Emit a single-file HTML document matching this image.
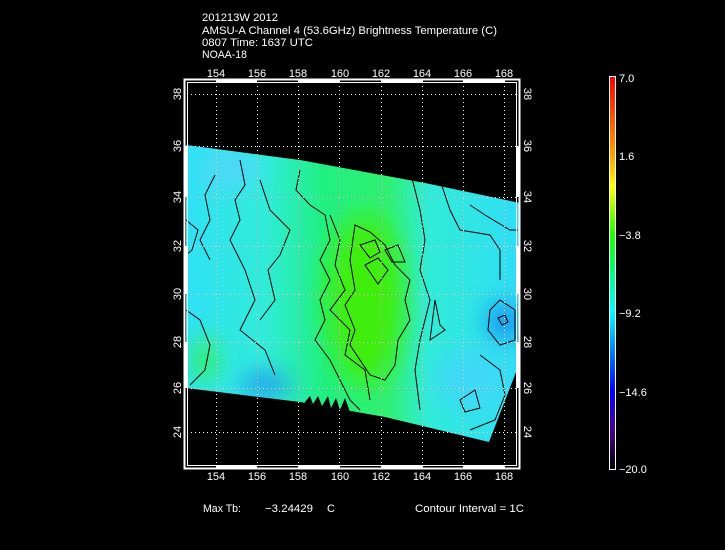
<!DOCTYPE html>
<html><head><meta charset="utf-8"><style>
html,body{margin:0;padding:0;background:#000;}
svg{display:block;}
text{font-family:"Liberation Sans",sans-serif;fill:#fff;font-size:11px;}
</style></head><body>
<svg width="725" height="550" viewBox="0 0 725 550" xmlns="http://www.w3.org/2000/svg">
<defs>
<linearGradient id="cb" x1="0" y1="0" x2="0" y2="1">
<stop offset="0" stop-color="#ff0000"/>
<stop offset="0.2" stop-color="#ffa000"/>
<stop offset="0.28" stop-color="#ffff00"/>
<stop offset="0.4" stop-color="#20ff00"/>
<stop offset="0.48" stop-color="#00ff60"/>
<stop offset="0.6" stop-color="#00ffff"/>
<stop offset="0.8" stop-color="#0000ff"/>
<stop offset="0.9" stop-color="#400090"/>
<stop offset="1" stop-color="#000000"/>
</linearGradient>
<linearGradient id="base" x1="0" y1="0" x2="1" y2="0">
<stop offset="0" stop-color="#30e0f8"/>
<stop offset="0.25" stop-color="#30ecd8"/>
<stop offset="0.42" stop-color="#20f080"/>
<stop offset="0.6" stop-color="#30f070"/>
<stop offset="0.72" stop-color="#30ecd8"/>
<stop offset="1" stop-color="#30dcf8"/>
</linearGradient>
<filter id="bl"><feGaussianBlur stdDeviation="12"/></filter>
<clipPath id="dc"><path d="M186,145 L300,160 L425,183 L520,203 L518,367 L489,442 L385,417 L300,402 L186,388 Z"/></clipPath>
</defs>
<g font-size="11">
<text x="202" y="21" textLength="76" lengthAdjust="spacingAndGlyphs">201213W 2012</text>
<text x="202" y="34" textLength="295" lengthAdjust="spacingAndGlyphs">AMSU-A Channel 4 (53.6GHz) Brightness Temperature (C)</text>
<text x="202" y="46" textLength="111" lengthAdjust="spacingAndGlyphs">0807 Time: 1637 UTC</text>
<text x="202" y="58" textLength="45" lengthAdjust="spacingAndGlyphs">NOAA-18</text>
</g>
<g clip-path="url(#dc)">
<rect x="180" y="140" width="345" height="310" fill="url(#base)"/>
<g filter="url(#bl)">
<ellipse cx="365" cy="300" rx="38" ry="85" fill="#40ee10"/>
<ellipse cx="505" cy="322" rx="18" ry="18" fill="#1890f0"/>
<ellipse cx="265" cy="385" rx="25" ry="12" fill="#2098f0"/>
<ellipse cx="205" cy="360" rx="15" ry="25" fill="#30f070"/>
<ellipse cx="230" cy="170" rx="30" ry="20" fill="#50d8f8"/>
<ellipse cx="470" cy="380" rx="35" ry="30" fill="#40d8f8"/>
</g>
<g fill="none" stroke="#000" stroke-width="1">
<path d="M300,170 L296,190 L310,205 L325,215 L330,240 L320,260 L330,280 L320,300 L325,320 L315,340 L330,360 L340,380 L350,400 L360,410"/>
<path d="M330,215 L340,240 L335,265 L345,290 L330,310 L350,330 L345,355 L365,370 L370,400"/>
<path d="M355,225 L370,232 L385,245 L395,265 L410,280 L405,300 L410,320 L398,340 L395,365 L385,380 L370,375 L360,360 L350,345 L355,330 L345,305 L355,290 L350,260 Z"/>
<path d="M360,245 L375,240 L380,252 L370,258 Z"/>
<path d="M365,265 L378,258 L388,270 L378,284 Z"/>
<path d="M385,250 L398,245 L405,262 L392,262 Z"/>
<path d="M410,170 L420,210 L425,240 L420,270 L430,300 L420,340 L415,370 L420,410"/>
<path d="M440,180 L450,210 L460,230 L490,235 L500,250 L500,280"/>
<path d="M470,205 L485,215 L510,230 L518,230"/>
<path d="M490,310 L500,300 L515,310 L515,340 L500,345 L488,330 Z"/>
<path d="M498,318 L505,315 L508,322 L502,325 Z"/>
<path d="M435,300 L440,325 L445,330 L430,340 Z"/>
<path d="M460,400 L475,390 L480,408 L465,412 Z"/>
<path d="M240,160 L245,185 L235,200 L240,220 L230,240 L245,270 L255,300 L240,330 L265,350 L275,375"/>
<path d="M215,175 L205,195 L210,220 L200,240 L210,260"/>
<path d="M186,220 L198,230 L192,250 L186,255"/>
<path d="M186,310 L200,320 L210,345 L205,370 L190,385"/>
<path d="M260,180 L270,210 L290,230 L280,255 L268,270 L275,300 L260,320"/>
<path d="M480,355 L500,370 L505,395 L495,420 L470,430"/>
</g>
<g fill="#000">
<path d="M305,402 L310,396 L313,404 L318,396 L322,406 L328,396 L331,408 L336,398 L340,410 L345,398 L350,412 L300,412 Z"/>
</g>
</g>
<g stroke="#fff" stroke-width="1" stroke-dasharray="1,3" fill="none">
<path d="M216.5,82V466M257.5,82V466M298.5,82V466M339.5,82V466M381.5,82V466M422.5,82V466M463.5,82V466M504.5,82V466"/>
<path d="M187,94.5H517M187,146.5H517M187,197.5H517M187,246.5H517M187,294.5H517M187,342.5H517M187,388.5H517M187,432.5H517"/>
</g>
<rect x="184.5" y="79.5" width="335" height="389" fill="none" stroke="#fff" stroke-width="2"/>
<rect x="187.5" y="82.5" width="329" height="383" fill="none" stroke="#fff" stroke-width="1"/>
<g stroke="#fff" stroke-width="3">
<path d="M216,81H257M298,81H340M381,81H423M463,81H505"/>
<path d="M216,467H257M298,467H340M381,467H423M463,467H505"/>
<path d="M186,146V197M186,246V294M186,342V388"/>
<path d="M518,146V197M518,246V294M518,342V388"/>
</g>
<g text-anchor="middle" font-size="11">
<text x="216" y="77">154</text><text x="257" y="77">156</text><text x="298" y="77">158</text><text x="340" y="77">160</text>
<text x="381" y="77">162</text><text x="422" y="77">164</text><text x="463" y="77">166</text><text x="504" y="77">168</text>
<text x="216" y="480">154</text><text x="257" y="480">156</text><text x="298" y="480">158</text><text x="340" y="480">160</text>
<text x="381" y="480">162</text><text x="422" y="480">164</text><text x="463" y="480">166</text><text x="504" y="480">168</text>
<text transform="translate(181,94) rotate(-90)">38</text>
<text transform="translate(181,146) rotate(-90)">36</text>
<text transform="translate(181,197) rotate(-90)">34</text>
<text transform="translate(181,246) rotate(-90)">32</text>
<text transform="translate(181,294) rotate(-90)">30</text>
<text transform="translate(181,342) rotate(-90)">28</text>
<text transform="translate(181,388) rotate(-90)">26</text>
<text transform="translate(181,432) rotate(-90)">24</text>
<text transform="translate(524,94) rotate(90)">38</text>
<text transform="translate(524,146) rotate(90)">36</text>
<text transform="translate(524,197) rotate(90)">34</text>
<text transform="translate(524,246) rotate(90)">32</text>
<text transform="translate(524,294) rotate(90)">30</text>
<text transform="translate(524,342) rotate(90)">28</text>
<text transform="translate(524,388) rotate(90)">26</text>
<text transform="translate(524,432) rotate(90)">24</text>
</g>
<rect x="609.5" y="76.5" width="6" height="393" fill="url(#cb)" stroke="#fff" stroke-width="1"/>
<g font-size="11">
<text x="619" y="82">7.0</text>
<text x="619" y="160">1.6</text>
<text x="619" y="239">−3.8</text>
<text x="619" y="317">−9.2</text>
<text x="619" y="396">−14.6</text>
<text x="619" y="473">−20.0</text>
<text x="203" y="512" textLength="38" lengthAdjust="spacingAndGlyphs">Max Tb:</text>
<text x="265" y="512" textLength="48" lengthAdjust="spacingAndGlyphs">−3.24429</text>
<text x="327" y="512">C</text>
<text x="415" y="512" textLength="109" lengthAdjust="spacingAndGlyphs">Contour Interval = 1C</text>
</g>
</svg>
</body></html>
